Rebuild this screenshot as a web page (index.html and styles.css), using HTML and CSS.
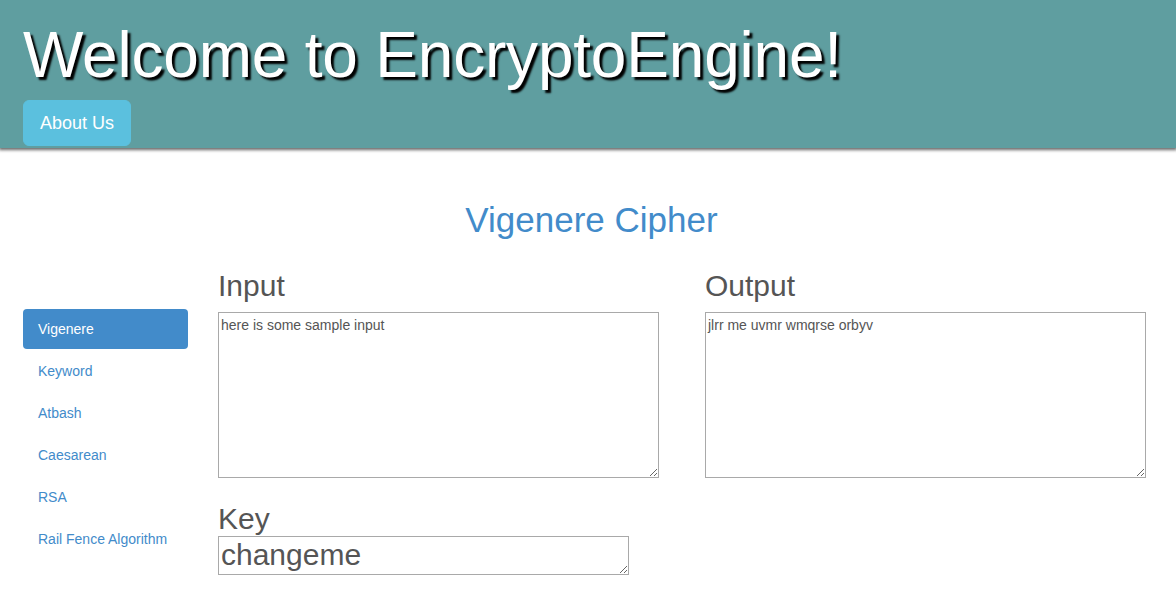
FILE: index.html
```html
<!DOCTYPE html>
<html>
<head>
<meta charset="utf-8">
<title>EncryptoEngine</title>
<link rel="stylesheet" href="styles.css">
</head>
<body>
<header class="site-header">
  <h1 class="site-title">Welcome to EncryptoEngine!</h1>
  <a class="btn-about" href="#">About Us</a>
</header>
<main class="page">
  <h2 class="cipher-title">Vigenere Cipher</h2>
  <div class="layout">
    <nav class="side-nav">
      <a class="pill active" href="#">Vigenere</a>
      <a class="pill" href="#">Keyword</a>
      <a class="pill" href="#">Atbash</a>
      <a class="pill" href="#">Caesarean</a>
      <a class="pill" href="#">RSA</a>
      <a class="pill" href="#">Rail Fence Algorithm</a>
    </nav>
    <section class="work">
      <div class="io-row">
        <div class="io-col">
          <h3 class="field-label">Input</h3>
          <textarea class="io-box">here is some sample input</textarea>
        </div>
        <div class="io-col">
          <h3 class="field-label">Output</h3>
          <textarea class="io-box">jlrr me uvmr wmqrse orbyv</textarea>
        </div>
      </div>
      <div class="key-block">
        <h3 class="field-label key-label">Key</h3>
        <textarea class="key-box" rows="1">changeme</textarea>
      </div>
    </section>
  </div>
</main>
</body>
</html>
```

FILE: styles.css
```css
* { box-sizing: border-box; }
html, body {
  margin: 0;
  padding: 0;
  background: #fff;
  font-family: "Liberation Sans", Arial, sans-serif;
  font-size: 14px;
  color: #333;
}
.site-header {
  background: #5f9ea0;
  height: 148px;
  padding: 20px 23px 0;
  box-shadow: 0 1px 3px 1px rgba(0, 0, 0, 0.6);
  position: relative;
  z-index: 1;
}
.site-title {
  margin: 0;
  font-size: 64px;
  line-height: 70px;
  font-weight: normal;
  color: #fff;
  text-shadow: 3px 3px 2px #000;
  letter-spacing: -0.2px;
}
.btn-about {
  display: inline-block;
  margin-top: 10px;
  padding: 10px 16px;
  font-size: 18px;
  line-height: 24px;
  color: #fff;
  text-decoration: none;
  background: #5bc0de;
  border: 1px solid #5bc0de;
  border-radius: 6px;
}
.page {
  padding: 52px 30px 0 23px;
}
.cipher-title {
  margin: 0 0 0 14px;
  text-align: center;
  font-size: 35px;
  line-height: 40px;
  font-weight: normal;
  color: #428bca;
}
.layout {
  display: flex;
  gap: 30px;
  margin-top: 26px;
}
.side-nav {
  width: 165px;
  flex: none;
  display: flex;
  flex-direction: column;
  gap: 2px;
  padding-top: 43px;
}
.pill {
  display: block;
  padding: 10px 15px;
  line-height: 20px;
  font-size: 14px;
  color: #428bca;
  text-decoration: none;
  border-radius: 4px;
}
.pill.active {
  background: #428bca;
  color: #fff;
}
.work {
  flex: 1;
}
.io-row {
  display: flex;
  gap: 46px;
}
.io-col {
  flex: 1;
}
.field-label {
  margin: 3px 0 10px;
  font-size: 30px;
  line-height: 33px;
  font-weight: normal;
  color: #555;
}
.io-box {
  display: block;
  width: 100%;
  height: 166px;
  padding: 4px 2px 2px;
  font-family: "Liberation Sans", Arial, sans-serif;
  font-size: 14px;
  line-height: 16px;
  color: #555;
  border: 1px solid #a9a9a9;
  background: #fff;
  resize: both;
}
.key-block {
  margin-top: 24px;
}
.key-label {
  margin-bottom: 1px;
}
.key-box {
  display: block;
  width: 411px;
  height: 39px;
  padding: 1px 2px;
  font-family: "Liberation Sans", Arial, sans-serif;
  font-size: 30px;
  line-height: 34px;
  color: #555;
  border: 1px solid #a9a9a9;
  background: #fff;
  overflow: hidden;
  resize: both;
}
```
